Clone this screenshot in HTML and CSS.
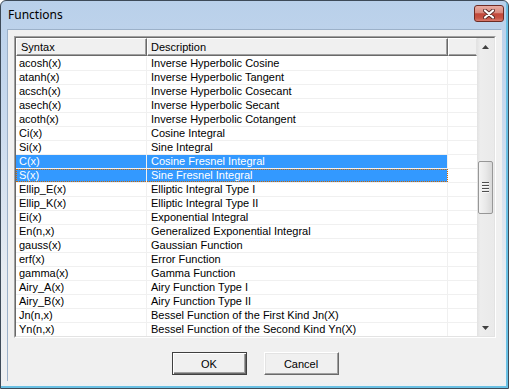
FILE: index.html
```html
<!DOCTYPE html>
<html lang="en">
<head>
    <meta charset="UTF-8">
    <title>Functions</title>
    <link rel="stylesheet" href="styles.css">
</head>
<body>

<div class="window">
    <div class="titlebar">
        <span class="title">Functions</span>
        <button class="close">
            <svg width="12" height="10" viewBox="0 0 12 10">
                <path d="M2 1.5 L10 8.5 M10 1.5 L2 8.5" stroke="#5a2a26" stroke-width="4" stroke-linecap="round"/>
                <path d="M2 1.5 L10 8.5 M10 1.5 L2 8.5" stroke="#ffffff" stroke-width="2.2" stroke-linecap="round"/>
            </svg>
        </button>
    </div>
    <div class="client">
        <div class="listbox">
            <div class="listinner">
                <div class="listview">
                    <div class="header">
                        <div class="hcell h1">Syntax</div>
                        <div class="hcell h2">Description</div>
                        <div class="hcell h3"></div>
                    </div>
                    <div class="rows">
                        <div class="row"><span class="c1">acosh(x)</span><span class="c2">Inverse Hyperbolic Cosine</span></div>
                        <div class="row"><span class="c1">atanh(x)</span><span class="c2">Inverse Hyperbolic Tangent</span></div>
                        <div class="row"><span class="c1">acsch(x)</span><span class="c2">Inverse Hyperbolic Cosecant</span></div>
                        <div class="row"><span class="c1">asech(x)</span><span class="c2">Inverse Hyperbolic Secant</span></div>
                        <div class="row"><span class="c1">acoth(x)</span><span class="c2">Inverse Hyperbolic Cotangent</span></div>
                        <div class="row"><span class="c1">Ci(x)</span><span class="c2">Cosine Integral</span></div>
                        <div class="row"><span class="c1">Si(x)</span><span class="c2">Sine Integral</span></div>
                        <div class="row selected"><span class="c1">C(x)</span><span class="c2">Cosine Fresnel Integral</span></div>
                        <div class="row selected focus"><span class="c1">S(x)</span><span class="c2">Sine Fresnel Integral</span></div>
                        <div class="row"><span class="c1">Ellip_E(x)</span><span class="c2">Elliptic Integral Type I</span></div>
                        <div class="row"><span class="c1">Ellip_K(x)</span><span class="c2">Elliptic Integral Type II</span></div>
                        <div class="row"><span class="c1">Ei(x)</span><span class="c2">Exponential Integral</span></div>
                        <div class="row"><span class="c1">En(n,x)</span><span class="c2">Generalized Exponential Integral</span></div>
                        <div class="row"><span class="c1">gauss(x)</span><span class="c2">Gaussian Function</span></div>
                        <div class="row"><span class="c1">erf(x)</span><span class="c2">Error Function</span></div>
                        <div class="row"><span class="c1">gamma(x)</span><span class="c2">Gamma Function</span></div>
                        <div class="row"><span class="c1">Airy_A(x)</span><span class="c2">Airy Function Type I</span></div>
                        <div class="row"><span class="c1">Airy_B(x)</span><span class="c2">Airy Function Type II</span></div>
                        <div class="row"><span class="c1">Jn(n,x)</span><span class="c2">Bessel Function of the First Kind Jn(X)</span></div>
                        <div class="row"><span class="c1">Yn(n,x)</span><span class="c2">Bessel Function of the Second Kind Yn(X)</span></div>
                    </div>
                </div>
                <div class="scrollbar">
                    <div class="arrow">
                        <svg width="7" height="4" viewBox="0 0 7 4"><polygon points="3.5,0 7,4 0,4" fill="#404040"/></svg>
                    </div>
                    <div class="track">
                        <div class="thumb">
                            <div class="grip"></div>
                            <div class="grip"></div>
                            <div class="grip"></div>
                            <div class="grip"></div>
                        </div>
                    </div>
                    <div class="arrow">
                        <svg width="7" height="4" viewBox="0 0 7 4"><polygon points="0,0 7,0 3.5,4" fill="#404040"/></svg>
                    </div>
                </div>
            </div>
        </div>
        <div class="buttons">
            <button class="btn default">OK</button>
            <button class="btn">Cancel</button>
        </div>
    </div>
</div>

</body>
</html>
```

FILE: styles.css
```css
body {
    margin: 0;
    background-color: #ffffff;
    font-family: "Liberation Sans", Arial, sans-serif;
    font-size: 11px;
}
.window {
    width: 509px;
    height: 389px;
    box-sizing: border-box;
    border: 1px solid #3d4a58;
    border-radius: 6px 6px 0 0;
    padding: 0 6px 6px 7px;
    display: flex;
    flex-direction: column;
    background: linear-gradient(#b9d0ea, #c9daee 30%, #e6ebf1 70%, #eef0f2);
    box-shadow: inset -2px -2px 0 #69c0e4;
}
.titlebar {
    height: 29px;
    display: flex;
    align-items: flex-start;
    justify-content: space-between;
}
.title {
    font-family: "Noto Sans", sans-serif;
    font-size: 12px;
    color: #000000;
    margin-top: 5px;
}
.close {
    width: 30px;
    height: 17px;
    margin-top: 4px;
    margin-right: -2px;
    padding: 0;
    border: 1px solid #6d2b24;
    border-radius: 3px;
    background: linear-gradient(#e8aca2, #d88a7e 45%, #c2473a 52%, #c65444 80%, #d97a6c);
    display: flex;
    align-items: center;
    justify-content: center;
}
.client {
    flex: 1;
    background-color: #f0f0f0;
    padding: 6px 6px 7px 6px;
    display: flex;
    flex-direction: column;
    box-shadow: -1px -1px 0 #9cb1c9;
}
.listbox {
    height: 302px;
    box-sizing: border-box;
    border: 1px solid;
    border-color: #a0a0a0 #ffffff #ffffff #a0a0a0;
}
.listinner {
    height: 100%;
    box-sizing: border-box;
    border: 1px solid;
    border-color: #696969 #e3e3e3 #e3e3e3 #696969;
    display: flex;
    background-color: #ffffff;
}
.listview {
    width: 461px;
    overflow: hidden;
}
.header {
    display: flex;
    height: 18px;
}
.hcell {
    box-sizing: border-box;
    height: 18px;
    line-height: 16px;
    background-color: #f0f0f0;
    border: 1px solid;
    border-color: #ffffff #696969 #696969 #ffffff;
    box-shadow: inset -1px -1px 0 #a0a0a0;
    padding-left: 4px;
    color: #000000;
}
.h1 {
    width: 131px;
}
.h2 {
    width: 301px;
    padding-left: 3px;
}
.h3 {
    width: 29px;
    border-right-color: #e3e3e3;
    box-shadow: inset 0 -1px 0 #a0a0a0;
}
.rows {
    padding-top: 1px;
}
.row {
    display: flex;
    height: 13px;
    line-height: 13px;
    border-bottom: 1px solid #f0f0f0;
    position: relative;
    color: #000000;
    white-space: nowrap;
}
.c1 {
    width: 131px;
    box-sizing: border-box;
    padding-left: 3px;
    border-right: 1px solid #f0f0f0;
}
.c2 {
    width: 301px;
    box-sizing: border-box;
    padding-left: 4px;
    border-right: 1px solid #f0f0f0;
}
.selected .c1,
.selected .c2 {
    background-color: #3399ff;
    color: #ffffff;
}
.focus::after {
    content: "";
    position: absolute;
    left: 0;
    top: 0;
    width: 432px;
    height: 13px;
    box-sizing: border-box;
    border: 1px dotted #cc6600;
}
.scrollbar {
    width: 17px;
    display: flex;
    flex-direction: column;
    background: linear-gradient(to right, #e2e2e2, #ededed 20%, #eaeaea);
}
.arrow {
    height: 17px;
    display: flex;
    align-items: center;
    justify-content: center;
}
.track {
    flex: 1;
}
.thumb {
    margin: 106px 1px 0 1px;
    height: 53px;
    box-sizing: border-box;
    border: 1px solid #979797;
    border-radius: 2px;
    background: linear-gradient(to right, #f4f4f4, #e9e9e9 50%, #d8d8d8);
    display: flex;
    flex-direction: column;
    align-items: center;
    justify-content: center;
    gap: 1px;
}
.grip {
    width: 7px;
    height: 1px;
    background-color: #4f4f4f;
    border-bottom: 1px solid #f8f8f8;
}
.buttons {
    margin-top: 14px;
    display: flex;
    justify-content: center;
    gap: 17px;
}
.btn {
    width: 75px;
    height: 23px;
    padding: 0;
    font-family: "Liberation Sans", Arial, sans-serif;
    font-size: 11px;
    color: #000000;
    background-color: #f0f0f0;
    border: 1px solid;
    border-color: #ffffff #696969 #696969 #ffffff;
    box-shadow: inset -1px -1px 0 #a0a0a0, inset 1px 1px 0 #e3e3e3;
}
.default {
    border-color: #404040;
    box-shadow: inset 1px 1px 0 #ffffff, inset -1px -1px 0 #696969, inset -2px -2px 0 #a0a0a0;
}
```
